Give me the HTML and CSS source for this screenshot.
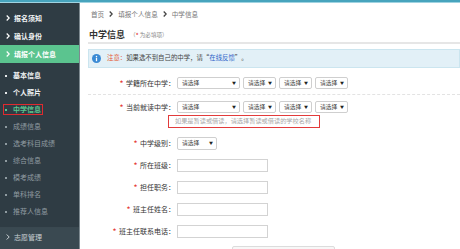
FILE: index.html
```html
<!DOCTYPE html>
<html lang="zh-CN">
<head>
<meta charset="utf-8">
<title>中学信息</title>
<link rel="stylesheet" href="styles.css">
</head>
<body>
<div class="topbar"></div>
<div class="layout">
  <aside class="sidebar">
    <ul class="menu">
      <li class="menu-item"><svg class="chev" viewBox="0 0 4 6" width="4" height="6"><polyline points="0.7,0.5 3.2,3 0.7,5.5" fill="none" stroke="#fff" stroke-width="1.2"/></svg>报名须知</li>
      <li class="menu-item"><svg class="chev" viewBox="0 0 4 6" width="4" height="6"><polyline points="0.7,0.5 3.2,3 0.7,5.5" fill="none" stroke="#fff" stroke-width="1.2"/></svg>确认身份</li>
      <li class="menu-item active"><svg class="chev" viewBox="0 0 4 6" width="4" height="6"><polyline points="0.7,0.5 3.2,3 0.7,5.5" fill="none" stroke="#fff" stroke-width="1.2"/></svg>填报个人信息</li>
    </ul>
    <ul class="submenu">
      <li class="sub done"><span class="sub-inner"><i class="dot"></i>基本信息</span></li>
      <li class="sub done"><span class="sub-inner"><i class="dot"></i>个人照片</span></li>
      <li class="sub current"><span class="sub-inner"><i class="dot"></i>中学信息</span></li>
      <li class="sub"><span class="sub-inner"><i class="dot"></i>成绩信息</span></li>
      <li class="sub"><span class="sub-inner"><i class="dot"></i>选考科目成绩</span></li>
      <li class="sub"><span class="sub-inner"><i class="dot"></i>综合信息</span></li>
      <li class="sub"><span class="sub-inner"><i class="dot"></i>模考成绩</span></li>
      <li class="sub"><span class="sub-inner"><i class="dot"></i>单科排名</span></li>
      <li class="sub"><span class="sub-inner"><i class="dot"></i>推荐人信息</span></li>
    </ul>
    <div class="menu-item section"><svg class="chev" viewBox="0 0 4 6" width="4" height="6"><polyline points="0.7,0.5 3.2,3 0.7,5.5" fill="none" stroke="#c9d0d4" stroke-width="1"/></svg>志愿管理</div>
  </aside>
  <main class="main">
    <nav class="crumbs">
      <span>首页</span>
      <svg class="crumb-sep" viewBox="0 0 4 6" width="4" height="6"><polyline points="0.7,0.5 3.2,3 0.7,5.5" fill="none" stroke="#444" stroke-width="1.3"/></svg>
      <span>填报个人信息</span>
      <svg class="crumb-sep" viewBox="0 0 4 6" width="4" height="6"><polyline points="0.7,0.5 3.2,3 0.7,5.5" fill="none" stroke="#444" stroke-width="1.3"/></svg>
      <span>中学信息</span>
    </nav>
    <h1 class="page-title">中学信息<span class="req-hint">（<b>*</b> 为必填项）</span></h1>
    <div class="notice">
      <svg class="info" viewBox="0 0 10 10" width="9" height="9"><circle cx="5" cy="5" r="5" fill="#3a8ad4"/><rect x="4.3" y="4.2" width="1.4" height="3.8" fill="#fff"/><circle cx="5" cy="2.7" r="0.8" fill="#fff"/></svg>
      <span class="warn">注意：</span>如果选不到自己的中学，请“<span class="link">在线反馈</span>”。
    </div>
    <div class="form">
      <div class="row row-sep">
        <label class="label"><b>*</b> 学籍所在中学：</label>
        <div class="selects">
          <div class="select w63"><span>请选择</span><i>▼</i></div>
          <div class="select w33"><span>请选择</span><i>▼</i></div>
          <div class="select w33"><span>请选择</span><i>▼</i></div>
          <div class="select w33"><span>请选择</span><i>▼</i></div>
        </div>
      </div>
      <div class="row row-top">
        <label class="label"><b>*</b> 当前就读中学：</label>
        <div class="col">
          <div class="selects">
            <div class="select w63"><span>请选择</span><i>▼</i></div>
            <div class="select w33"><span>请选择</span><i>▼</i></div>
            <div class="select w33"><span>请选择</span><i>▼</i></div>
            <div class="select w33"><span>请选择</span><i>▼</i></div>
          </div>
          <div class="hint">如果是暂读或借读，请选择暂读或借读的学校名称</div>
        </div>
      </div>
      <div class="row row-first">
        <label class="label"><b>*</b> 中学级别：</label>
        <div class="select w40 tall"><span>请选择</span><i>▼</i></div>
      </div>
      <div class="row">
        <label class="label"><b>*</b> 所在班级：</label>
        <div class="input"></div>
      </div>
      <div class="row">
        <label class="label"><b>*</b> 担任职务：</label>
        <div class="input"></div>
      </div>
      <div class="row">
        <label class="label"><b>*</b> 班主任姓名：</label>
        <div class="input"></div>
      </div>
      <div class="row">
        <label class="label"><b>*</b> 班主任联系电话：</label>
        <div class="input"></div>
      </div>
      <div class="actions"><div class="btn"></div></div>
    </div>
  </main>
</div>
</body>
</html>
```

FILE: styles.css
```css
* { box-sizing: border-box; }
html, body { margin: 0; padding: 0; }
body {
  width: 460px;
  height: 249px;
  overflow: hidden;
  background: #fff;
  font-family: "Noto Sans CJK SC", "Noto Sans", sans-serif;
  color: #333;
}
.topbar {
  height: 3px;
  background: #47a4bd;
  border-bottom: 1px solid #9fd3e1;
}
.layout {
  display: flex;
  height: 246px;
}
.sidebar {
  width: 80px;
  flex: none;
  background: #2f3c44;
  border-right: 1px solid #7d8990;
  padding-top: 6px;
  display: flex;
  flex-direction: column;
}
.menu, .submenu { list-style: none; margin: 0; padding: 0; }
.menu-item {
  height: 18px;
  display: flex;
  align-items: center;
  padding-left: 6px;
  font-size: 7px;
  font-weight: 700;
  color: #f2f4f5;
  line-height: 1;
}
.chev { margin-right: 4px; flex: none; }
.menu-item.active { background: #5bc48f; color: #fff; }
.submenu { padding-top: 4px; padding-bottom: 7px; border-bottom: 1px solid #3a4850; }
.sub {
  height: 17px;
  display: flex;
  align-items: center;
  padding-left: 5px;
  font-size: 7px;
  color: #8f9ba1;
  line-height: 1;
}
.sub-inner { display: inline-flex; align-items: center; }
.dot {
  display: inline-block;
  width: 2px;
  height: 2px;
  background: #8f9ba1;
  margin-right: 6px;
}
.sub.done { color: #f0f2f3; font-weight: 700; }
.sub.done .dot { background: #e6e9eb; }
.sub.current { color: #5bc48f; font-weight: 700; }
.sub.current .dot { background: #5bc48f; }
.sub.current .sub-inner {
  outline: 1.5px solid #e02a2f;
  outline-offset: 1.5px;
}
.menu-item.section {
  background: #3a4951;
  color: #c9d0d4;
  font-weight: 400;
  height: 20px;
  flex: 1;
  align-items: flex-start;
  padding-top: 6px;
}

.main {
  flex: 1;
  padding-left: 8px;
  min-width: 0;
}
.crumbs {
  height: 10px;
  margin-top: 6px;
  padding-left: 3px;
  display: flex;
  align-items: center;
  gap: 5px;
  font-size: 6.6px;
  color: #777;
  line-height: 1;
}
.crumb-sep { flex: none; }
.page-title {
  margin: 10px 0 0;
  font-size: 9px;
  font-weight: 700;
  line-height: 12px;
  color: #333;
  padding-left: 1px;
  padding-bottom: 1px;
  border-bottom: 2px solid #e6e6e6;
  display: flex;
  align-items: center;
}
.req-hint {
  font-size: 5.6px;
  font-weight: 400;
  color: #888;
  margin-left: 5px;
}
.req-hint b { color: #e53935; font-weight: 700; }
.notice {
  margin-top: 5px;
  height: 19px;
  background: #e2f0f7;
  border: 1px solid #cbe5ef;
  display: flex;
  align-items: center;
  padding-left: 3px;
  font-size: 6.4px;
  color: #444;
  line-height: 1;
  white-space: nowrap;
}
.info { margin-right: 6px; flex: none; }
.warn { color: #e4572e; }
.link { color: #2f63c9; }

.form { padding-top: 4px; }
.row {
  display: flex;
  align-items: center;
  height: 22px;
}
.row-sep {
  border-bottom: 1px dashed #e3e3e3;
  height: 23px;
}
.row-top {
  height: auto;
  align-items: flex-start;
  padding-top: 6px;
}
.row-first { margin-top: 4px; }
.label {
  width: 87px;
  flex: none;
  text-align: right;
  font-size: 7px;
  line-height: 12px;
  color: #333;
  margin-right: 2px;
  white-space: nowrap;
}
.label b { color: #e53935; font-weight: 700; margin-right: 1px; }
.col { display: flex; flex-direction: column; }
.selects { display: flex; gap: 3px; }
.select {
  height: 12px;
  border: 1px solid #cfcfcf;
  border-radius: 2px;
  background: #fff;
  display: flex;
  align-items: center;
  justify-content: space-between;
  padding: 0 3px 0 4px;
  font-size: 5.8px;
  color: #444;
  line-height: 1;
}
.select i { font-style: normal; font-size: 4px; color: #222; }
.select.tall { height: 13px; }
.w63 { width: 63px; }
.w33 { width: 33px; }
.w40 { width: 40px; }
.hint {
  margin-top: 2px;
  margin-left: -9px;
  width: 152px;
  height: 13px;
  border: 1.5px solid #e23b3b;
  padding-left: 6px;
  display: flex;
  align-items: center;
  font-size: 6.2px;
  color: #a9a9a9;
  line-height: 1;
  white-space: nowrap;
}
.input {
  width: 91px;
  height: 13px;
  border: 1px solid #d3d3d3;
  background: #fff;
}
.actions {
  padding-left: 144px;
  margin-top: 4px;
}
.btn {
  width: 103px;
  height: 14px;
  border: 1px solid #dcdcdc;
  border-radius: 2px;
  background: #f7f7f7;
}
```
